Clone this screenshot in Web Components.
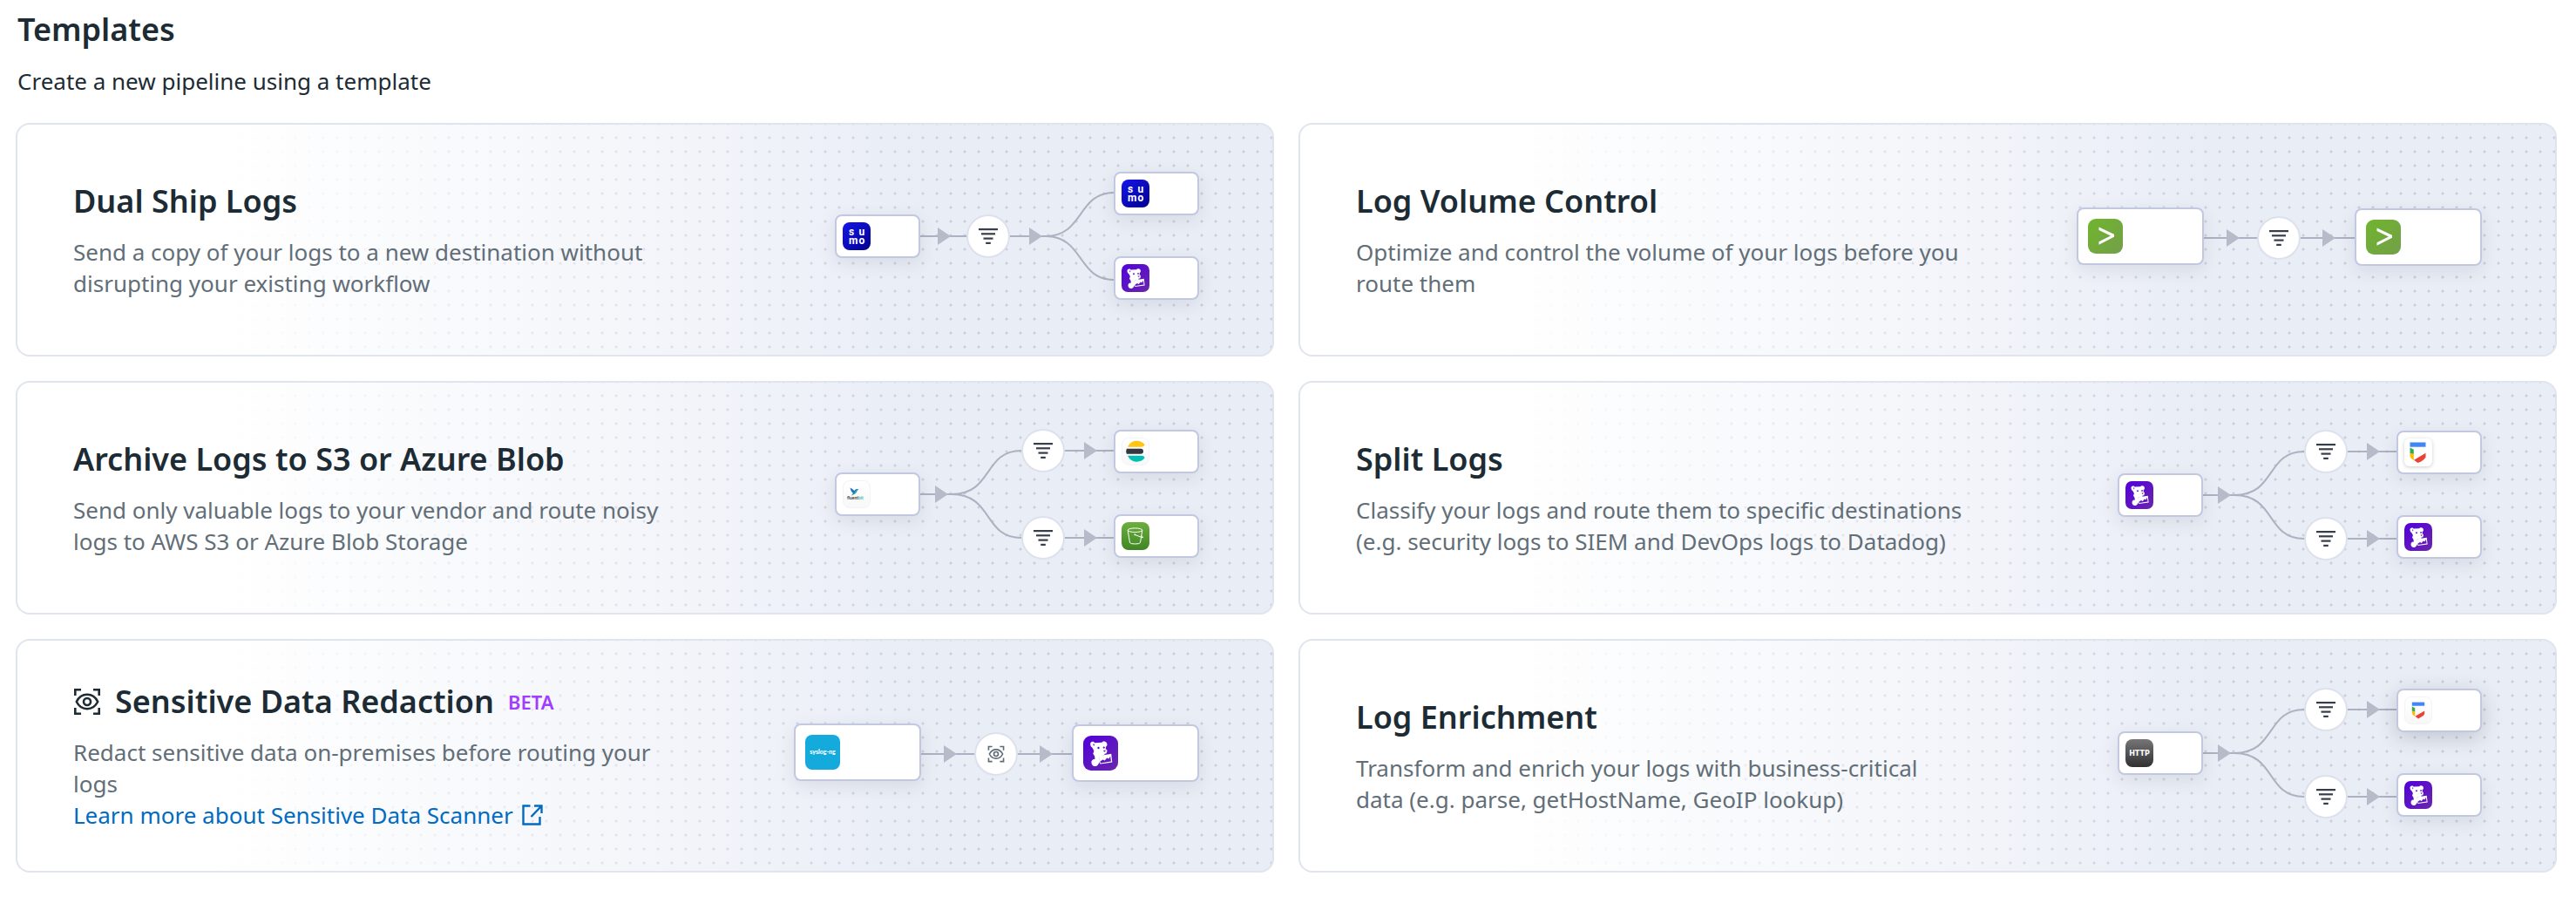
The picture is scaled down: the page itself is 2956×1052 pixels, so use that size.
<!DOCTYPE html>
<html lang="en">
<head>
<meta charset="utf-8">
<title>Templates</title>
<style>
  body { margin: 0; background: #fff; color: #1c2b34; font-family: "Noto Sans", sans-serif; font-size: 26px; line-height: 36px; }
</style>
</head>
<body>
<templates-page>
  <span slot="title">Templates</span>
  <span slot="intro">Create a new pipeline using a template</span>

  <template-card>
    <span slot="title">Dual Ship Logs</span>
    Send a copy of your logs to a new destination without disrupting your existing workflow
    <pipe-diagram slot="diagram" layout="ship" logos="sumo sumo datadog"></pipe-diagram>
  </template-card>

  <template-card>
    <span slot="title">Log Volume Control</span>
    Optimize and control the volume of your logs before you route them
    <pipe-diagram slot="diagram" layout="line" logos="sentinel sentinel"></pipe-diagram>
  </template-card>

  <template-card>
    <span slot="title">Archive Logs to S3 or Azure Blob</span>
    Send only valuable logs to your vendor and route noisy logs to AWS S3 or Azure Blob Storage
    <pipe-diagram slot="diagram" layout="split" logos="fluentbit elastic bucket"></pipe-diagram>
  </template-card>

  <template-card>
    <span slot="title">Split Logs</span>
    Classify your logs and route them to specific destinations (e.g. security logs to SIEM and DevOps logs to Datadog)
    <pipe-diagram slot="diagram" layout="split-low" logos="datadog chronicle datadog"></pipe-diagram>
  </template-card>

  <template-card>
    <ui-icon slot="icon" name="scan" style="--size: 32px"></ui-icon>
    <span slot="title">Sensitive Data Redaction</span>
    <beta-tag slot="tag">BETA</beta-tag>
    Redact sensitive data on-premises before routing your logs
    <doc-link slot="link" href="#sensitive-data-scanner">Learn more about Sensitive Data Scanner</doc-link>
    <pipe-diagram slot="diagram" layout="line" step="scan" logos="syslog datadog"></pipe-diagram>
  </template-card>

  <template-card>
    <span slot="title">Log Enrichment</span>
    Transform and enrich your logs with business-critical data (e.g. parse, getHostName, GeoIP lookup)
    <pipe-diagram slot="diagram" layout="split-low" raised="1" logos="http chronicle-small datadog"></pipe-diagram>
  </template-card>
</templates-page>

<script>
const define = (name, render) => customElements.define(name, class extends HTMLElement {
  constructor() { super(); this.attachShadow({ mode: 'open' }); }
  connectedCallback() { this.shadowRoot.innerHTML = render(this); }
});

const ICONS = {
  scan: `<svg viewBox="0 0 32 32" fill="none" stroke="currentColor" stroke-width="2.6">
    <path d="M2.3 9V2.3H9M23 2.3h6.7V9M29.7 23v6.7H23M9 29.7H2.3V23"/>
    <path d="M3.8 16C6.5 10.6 11 7.8 16 7.8S25.500 10.600 28.200 16C25.500 21.400 21 24.200 16 24.200S6.500 21.400 3.800 16Z"/>
    <circle cx="16" cy="16" r="4"/></svg>`,
  filter: `<svg viewBox="0 0 24 24" fill="#383d4b"><rect x="1" y="3" width="22" height="2.200"/><rect x="4" y="8.200" width="16" height="2.200"/><rect x="6.500" y="13.500" width="11" height="2.200"/><rect x="9.200" y="18.800" width="5.600" height="2.200"/></svg>`,
  external: `<svg viewBox="0 0 24 24" fill="none" stroke="currentColor" stroke-width="2.400"><path d="M9.500 1.500H1.500V22.500H20.500V14"/><path d="M14 1.500H22.500V10M22 2L10.500 14"/></svg>`
};

define('ui-icon', el => `<style>
  :host { display: inline-block; flex: none; width: var(--size, 24px); height: var(--size, 24px); }
  svg { display: block; width: 100%; height: 100%; }
</style>${ICONS[el.getAttribute('name')]}`);

define('beta-tag', () => `<style>
  :host { display: block; color: #a23cff; font-size: 22px; line-height: 48px; font-weight: 600; }
</style><slot></slot>`);

define('doc-link', el => `<style>
  :host { display: block; }
  a { display: inline-flex; align-items: center; gap: 10px; color: #006bc2; text-decoration: none; }
</style><a href="${el.getAttribute('href')}"><slot></slot><ui-icon name="external"></ui-icon></a>`);

const DOG = `<rect width="40" height="40" rx="9" fill="url(#g)"/>
  <g fill="#fff"><path d="M8.200 10.200C7.800 7.800 9.500 6.400 12 6.900L13.200 8.200 21.500 7.700C22.500 6 25.500 6.200 27 8.200 28 10 27.400 12.400 26 12.600L25.800 14.800 27.600 17.200 26.600 20.300 24.200 21 24.600 22.200 18.500 23.400 19 30 16.800 33.500C15 35.800 11.600 35.500 10.200 33.200 8.800 31 9.200 28 11.400 27.200L13.600 26.800 13 23.300 11.300 20.800 12.400 17.600 10.300 13.600C9 13 8.400 11.800 8.200 10.200Z"/>
  <path d="M18 23.200L32.200 20.800 33.300 30.500 19.200 32.600ZM19.400 29.500L19.800 31.400 32 29.500 31.100 23.500 29.400 26.500 27.200 25.600 24.700 28.600 22.500 27.600Z" fill-rule="evenodd"/></g>
  <g fill="#5a0fce"><circle cx="17.500" cy="14" r="1.200"/><circle cx="23.800" cy="13.600" r="1.100"/><path d="M22.800 17.200l3-.7-.8 2.200zM11.200 9.200l2 .8-1.200 2z"/></g>`;

const GOOGLE = `<path fill="#4285f4" d="M6.500 4.500h18v5.200h-18z"/><path fill="#34a853" d="M6.500 10.500l4.300 2.300v5.200l-4.300-.8z"/><path fill="#fbbc04" d="M6.500 17l4.300.8v7.200q-4.300-2.500-4.300-5.500z"/><path fill="#ea4335" d="M11 24.800l13.500-8v4.600q-2 3.800-9 6.600z"/>`;
const PALE = `<rect x=".5" y=".5" width="31" height="31" rx="7.500" fill="url(#g)" stroke="#f4f4f6"/>`;
const grad = (a, b, x = 1, y = 1) => `<defs><linearGradient id="g" x1="0" y1="0" x2="${x}" y2="${y}"><stop stop-color="${a}"/><stop offset="1" stop-color="${b}"/></linearGradient></defs>`;

const LOGOS = {
  sumo: `<svg viewBox="0 0 32 32">${grad('#1616ea', '#00008f')}<rect width="32" height="32" rx="8" fill="url(#g)"/>
    <g fill="#fff" font-family="Roboto, sans-serif" font-weight="700" font-size="12"><text x="7" y="14.500">s</text><text x="18.500" y="14.500">u</text><text x="7" y="24.500">m</text><text x="18.500" y="24.500">o</text></g></svg>`,
  datadog: `<svg viewBox="0 0 40 40">${grad('#5200dc', '#6a26ac')}${DOG}</svg>`,
  sentinel: `<svg viewBox="0 0 40 40">${grad('#70b52c', '#739f4a')}<rect width="40" height="40" rx="9" fill="url(#g)"/>
    <path d="M12.500 9.500L30 17.800V20.800L12.500 29.800V26.200L26 19.400 12.500 12.900Z" fill="#fff"/></svg>`,
  fluentbit: `<svg viewBox="0 0 32 32">${grad('#ffffff', '#f8f8f9', 0)}${PALE}
    <path d="M8.500 8.500q3 1 4.800 3.600.8-1.600 2.700-2l2.500.4q-2.200.7-2.500 2.500-.6 2.600-3 3l-2.500 1.500 1.500-2.300q-3-2.300-3.500-6.700z" fill="#2074bd"/><path d="M14 13q1.200-2.500 4-2.500-1.700.8-2 2.600-.6 2.200-3 2.500z" fill="#19b6ae"/><path d="M13 14.500l-2.200 2.800-1 .3 1.500-2.400z" fill="#6bc26a"/>
    <text x="5" y="22" font-family="Roboto, sans-serif" font-weight="500" font-size="5" fill="#333">fluent<tspan fill="#31bda0">bit</tspan></text></svg>`,
  elastic: `<svg viewBox="0 0 32 32">${grad('#ffffff', '#f8f8f9', 0)}${PALE}
    <path fill="#fec514" d="M7 10.700C10 4.500 15 3.700 17.500 3.700c4 0 7.300 1.700 9.200 4.600q-.8 2.400-4 2.400z"/><path fill="#343741" d="M5.800 12.700H22a3 3 0 0 1 0 6H5.800q-1.200-3 0-6z"/><path fill="#00bfb3" d="M7 20.700h15.700q3.200 0 4 2.400c-1.900 2.900-5.200 4.600-9.200 4.600C15 27.700 10 26.900 7 20.700z"/></svg>`,
  bucket: `<svg viewBox="0 0 32 32">${grad('#6cae3e', '#3f8624', 0)}<rect width="32" height="32" rx="8" fill="url(#g)"/>
    <g fill="none" stroke="#fff" stroke-width="1"><ellipse cx="15.500" cy="9.200" rx="8.300" ry="2.300"/><path d="M7.200 9.500L9.500 23.500q.5 1.500 6 1.500t6-1.500L23.800 9.500"/><path d="M15.500 14.500L23 17.500q2 .8 1.500-.5-1-.8-2-1.200"/><circle cx="15.300" cy="14.300" r=".6"/></g></svg>`,
  chronicle: `<svg viewBox="0 0 32 32" style="filter: drop-shadow(0 1px 2px #0003)"><rect width="32" height="32" rx="6" fill="#fff"/>${GOOGLE}</svg>`,
  'chronicle-small': `<svg viewBox="0 0 32 32">${grad('#ffffff', '#f8f8f9', 0)}${PALE}<g transform="translate(3.600 3) scale(.8)">${GOOGLE}</g></svg>`,
  syslog: `<svg viewBox="0 0 40 40"><rect width="40" height="40" rx="8" fill="#14aadc"/><text x="20" y="22" text-anchor="middle" fill="#fff" font-family="Lato, sans-serif" font-weight="900" font-size="7">syslog-ng</text></svg>`,
  http: `<svg viewBox="0 0 32 32">${grad('#767676', '#303030', 0)}<rect width="32" height="32" rx="8" fill="url(#g)"/><text x="16" y="19" text-anchor="middle" fill="#fff" font-family="DejaVu Sans, sans-serif" font-weight="700" font-size="8">HTTP</text></svg>`
};

define('brand-logo', el => `<style>
  :host { display: block; width: var(--logo, 32px); height: var(--logo, 32px); }
  svg { display: block; width: 100%; height: 100%; overflow: visible; }
</style>${LOGOS[el.getAttribute('name')]}`);

// Node and step positions on the diagram's 560 x 264 canvas.
const small = (x, y) => ({ x, y, w: 98, h: 50 });
const large = (x, y) => ({ x, y, w: 146, h: 66 });
const split = y => ({
  nodes: [small(58, y - 25), small(378, y - 74), small(378, y + 23)],
  steps: [[272, y - 75], [272, y + 25]],
  wires: `M156 ${y}H192C240 ${y} 228 ${y - 50} 272 ${y - 50}H378M192 ${y}C240 ${y} 228 ${y + 50} 272 ${y + 50}H378`,
  arrows: [[173, y], [344, y - 50], [344, y + 50]]
});
const LAYOUTS = {
  ship: {
    nodes: [small(58, 103), small(378, 54), small(378, 151)],
    steps: [[209, 103]],
    wires: 'M156 128H300C344 128 336 78 378 78M300 128C344 128 336 178 378 178',
    arrows: [[176, 128], [281, 128]]
  },
  line: {
    nodes: [large(11, 95), large(330, 96)],
    steps: [[218, 105]],
    wires: 'M157 130H330',
    arrows: [[183, 130], [293, 130]]
  },
  split: split(128),
  'split-low': split(129)
};

define('pipe-diagram', el => {
  const { nodes, steps, wires, arrows } = LAYOUTS[el.getAttribute('layout')];
  const logos = el.getAttribute('logos').split(' ');
  const step = el.getAttribute('step') || 'filter';
  const raised = el.getAttribute('raised');
  return `<style>
    :host { display: block; position: relative; width: 560px; height: 264px; }
    .wires { display: block; }
    .node, .step { position: absolute; box-sizing: border-box; background: #fff; display: flex; align-items: center; }
    .node { border: 2px solid #c2c8df; border-radius: 8px; box-shadow: 0 6px 20px #1c2b3418; }
    .node.small { padding-left: 7px; } .node.large { padding-left: 11px; }
    .node.large brand-logo { --logo: 40px; }
    .node.raised { box-shadow: 0 6px 24px #1c2b3433; }
    .step { width: 50px; height: 50px; border: 2px solid #dde1ed; border-radius: 50%; justify-content: center; color: #5f6b75; }
  </style>
  <svg class="wires" width="560" height="264" viewBox="0 0 560 264" aria-hidden="true">
    <path d="${wires}" fill="none" stroke="#adb1c1" stroke-width="2"/>
    ${arrows.map(([x, y]) => `<path d="M${x} ${y - 10}l15 10-15 10z" fill="#b7bbc9"/>`).join('')}
  </svg>
  ${nodes.map((n, i) => `<div class="node ${n.w > 100 ? 'large' : 'small'} ${raised === String(i) ? 'raised' : ''}" style="left:${n.x}px;top:${n.y}px;width:${n.w}px;height:${n.h}px"><brand-logo name="${logos[i]}"></brand-logo></div>`).join('')}
  ${steps.map(([x, y]) => `<div class="step" style="left:${x}px;top:${y}px"><ui-icon name="${step}" style="--size:${step === 'scan' ? 20 : 24}px"></ui-icon></div>`).join('')}`;
});

define('template-card', () => `<style>
  :host { display: block; position: relative; box-sizing: border-box; min-height: 268px; border: 2px solid #e0e4ee; border-radius: 16px; overflow: hidden;
    background: linear-gradient(90deg, #fff 16%, #f3f5fa 52%, #e9edf6 72%); }
  .dots { position: absolute; inset: 0; background: radial-gradient(circle at center, #cccfd8 1px, transparent 2px) -9px -9px / 16px 16px;
    -webkit-mask-image: linear-gradient(90deg, transparent 16%, #0008 50%, #000 74%); mask-image: linear-gradient(90deg, transparent 16%, #0008 50%, #000 74%); }
  article { position: relative; display: flex; align-items: center; justify-content: space-between; min-height: 264px; }
  .copy { box-sizing: border-box; flex: 0 1 768px; padding-left: 64px; }
  header { display: flex; align-items: center; gap: 16px; margin-bottom: 16px; }
  h2 { margin: 0; font-size: 36px; line-height: 48px; font-weight: 600; }
  .text { margin: 0; color: #626e77; }
  .art { flex: none; }
</style>
<div class="dots"></div>
<article>
  <div class="copy">
    <header><slot name="icon"></slot><h2><slot name="title"></slot></h2><slot name="tag"></slot></header>
    <p class="text"><slot></slot></p>
    <slot name="link"></slot>
  </div>
  <div class="art"><slot name="diagram"></slot></div>
</article>`);

define('templates-page', () => `<style>
  :host { display: block; padding: 10px 22px 52px 18px; }
  .head { padding-left: 2px; }
  h1 { margin: 0; font-size: 36px; line-height: 48px; font-weight: 600; }
  .intro { margin: 17px 0 30px; }
  .grid { display: grid; grid-template-columns: 1fr 1fr; gap: 28px; }
</style>
<div class="head"><h1><slot name="title"></slot></h1><p class="intro"><slot name="intro"></slot></p></div>
<main class="grid"><slot></slot></main>`);
</script>
</body>
</html>
